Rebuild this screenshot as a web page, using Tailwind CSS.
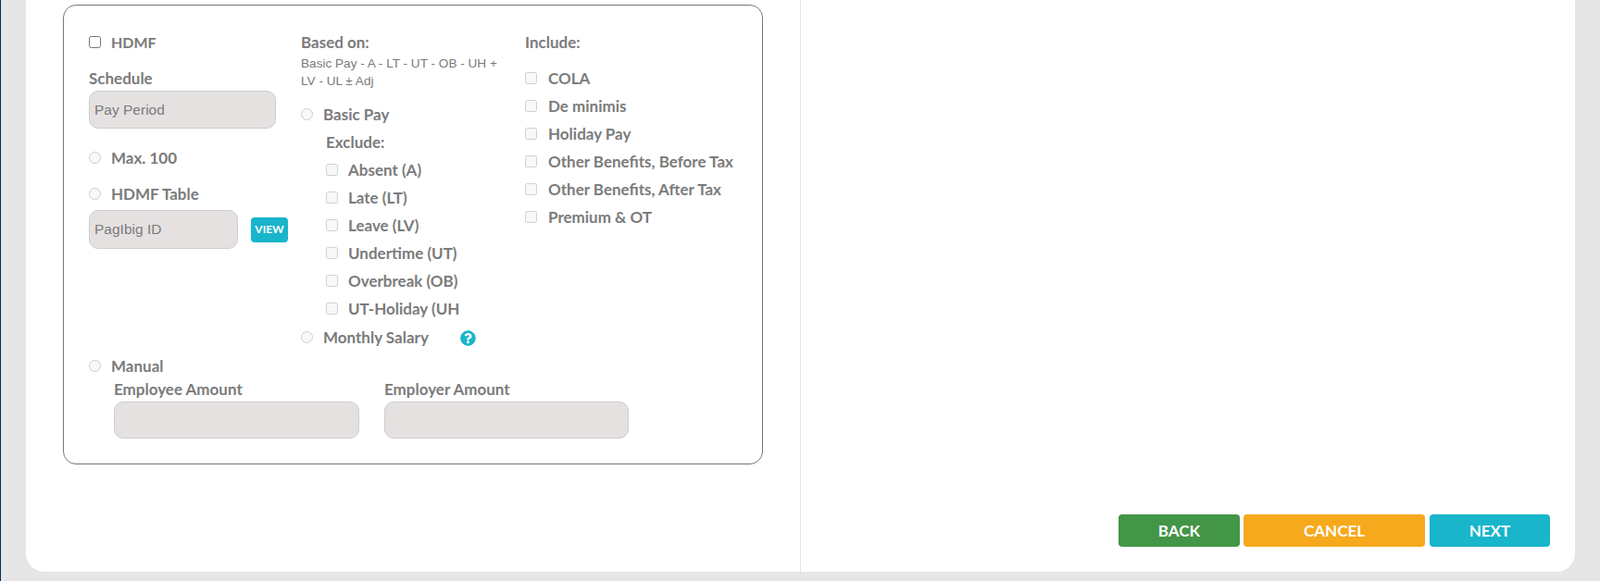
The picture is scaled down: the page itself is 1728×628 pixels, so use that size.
<!DOCTYPE html>
<html lang="en">
<head>
    <meta charset="UTF-8">
    <meta name="viewport" content="width=device-width, initial-scale=1.0">
    <title>HDMF Settings</title>
    <script src="https://cdn.jsdelivr.net/npm/@tailwindcss/browser@4"></script>
</head>
<body class="bg-[#e6e6e6] font-['Lato',sans-serif] text-[#7b7b7b]">
    <div class="h-[628px] overflow-hidden border-l border-[#012b57] pl-[27px] pr-[27px]">
        <div class="flex h-[618px] bg-white rounded-b-[20px]">

            <!-- Left pane -->
            <div class="w-[837px] border-r border-[#e5e5e5] pl-[40px] pt-[5px]">
                <div class="w-[756px] h-[497px] border border-[#77777a] rounded-[14px] pl-[27px] pt-[26px]">
                    <div class="flex text-[17px] font-bold">

                        <!-- HDMF column -->
                        <div class="w-[229px]">
                            <label class="flex items-center h-[27px]">
                                <input type="checkbox" class="w-[13px] h-[13px] m-0">
                                <span class="ml-[11px] text-[16px]">HDMF</span>
                            </label>
                            <p class="mt-[16px] leading-[20px]">Schedule</p>
                            <input disabled value="Pay Period" class="block w-[202px] h-[41px] mt-[3px] px-[5px] bg-[#e5e1e1] border border-[#cdcdcd] rounded-[10px] font-['Liberation_Sans',sans-serif] text-[15.500px] font-normal text-[#7b7b7b]">
                            <label class="flex items-center h-[30px] mt-[17px]">
                                <input type="radio" disabled class="w-[13px] h-[13px] mt-0 mx-0 mb-[2px]">
                                <span class="ml-[11px]">Max. 100</span>
                            </label>
                            <label class="flex items-center h-[30px] mt-[9px]">
                                <input type="radio" disabled class="w-[13px] h-[13px] mt-0 mx-0 mb-[2px]">
                                <span class="ml-[11px]">HDMF Table</span>
                            </label>
                            <div class="flex items-center mt-[2px]">
                                <input disabled value="PagIbig ID" class="block w-[161px] h-[42px] px-[5px] bg-[#e5e1e1] border border-[#cdcdcd] rounded-[10px] font-['Liberation_Sans',sans-serif] text-[15.500px] font-normal text-[#7b7b7b]">
                                <button class="w-[40px] h-[27px] ml-[14px] bg-[#18b5cb] rounded-[4px] text-white text-[12px] font-bold">VIEW</button>
                            </div>
                        </div>

                        <!-- Based on column -->
                        <div class="w-[242px]">
                            <p class="h-[28px] flex items-center">Based on:</p>
                            <p class="w-[220px] -mt-[1px] font-['Liberation_Sans',sans-serif] text-[13.600px] leading-[19px] font-normal">Basic Pay - A - LT - UT - OB - UH + LV - UL ± Adj</p>
                            <label class="flex items-center h-[30px] mt-[12px]">
                                <input type="radio" disabled class="w-[13px] h-[13px] mt-0 mx-0 mb-[2px]">
                                <span class="ml-[11px]">Basic Pay</span>
                            </label>
                            <div class="pl-[27px]">
                                <p class="h-[30px] flex items-center">Exclude:</p>
                                <label class="flex items-center h-[30px]"><input type="checkbox" disabled class="w-[13px] h-[13px] mt-0 mx-0 mb-[2px]"><span class="ml-[11px]">Absent (A)</span></label>
                                <label class="flex items-center h-[30px]"><input type="checkbox" disabled class="w-[13px] h-[13px] mt-0 mx-0 mb-[2px]"><span class="ml-[11px]">Late (LT)</span></label>
                                <label class="flex items-center h-[30px]"><input type="checkbox" disabled class="w-[13px] h-[13px] mt-0 mx-0 mb-[2px]"><span class="ml-[11px]">Leave (LV)</span></label>
                                <label class="flex items-center h-[30px]"><input type="checkbox" disabled class="w-[13px] h-[13px] mt-0 mx-0 mb-[2px]"><span class="ml-[11px]">Undertime (UT)</span></label>
                                <label class="flex items-center h-[30px]"><input type="checkbox" disabled class="w-[13px] h-[13px] mt-0 mx-0 mb-[2px]"><span class="ml-[11px]">Overbreak (OB)</span></label>
                                <label class="flex items-center h-[30px]"><input type="checkbox" disabled class="w-[13px] h-[13px] mt-0 mx-0 mb-[2px]"><span class="ml-[11px]">UT-Holiday (UH</span></label>
                            </div>
                            <div class="flex items-center h-[30px] mt-[1px]">
                                <input type="radio" disabled class="w-[13px] h-[13px] mt-0 mx-0 mb-[2px]">
                                <span class="ml-[11px] w-[148px]">Monthly Salary</span>
                                <svg class="w-[17px] h-[17px]" viewBox="0 0 512 512"><path fill="#18b5cb" d="M504 256c0 137-111 248-248 248S8 393 8 256 119 8 256 8s248 111 248 248zM262.700 90c-54.500 0-89.300 23-116.500 63.800-3.500 5.300-2.400 12.400 2.700 16.300l34.700 26.300c5.200 3.900 12.600 3 16.700-2.100 17.900-22.700 30.100-35.800 57.300-35.800 20.400 0 45.700 13.100 45.700 33 0 15-12.400 22.700-32.600 34-23.600 13.200-54.800 29.700-54.800 70.900V302c0 6.600 5.400 12 12 12h56c6.600 0 12-5.400 12-12v-1.300c0-28.600 83.500-29.800 83.500-107.100 0-58.200-60.400-102.600-116.700-102.600zM256 338.900c-25.500 0-46.200 20.700-46.200 46.200 0 25.500 20.700 46.200 46.200 46.200s46.200-20.700 46.200-46.200c0-25.500-20.700-46.200-46.200-46.200z"/></svg>
                            </div>
                        </div>

                        <!-- Include column -->
                        <div>
                            <p class="h-[28px] flex items-center">Include:</p>
                            <div class="mt-[10px]">
                                <label class="flex items-center h-[30px]"><input type="checkbox" disabled class="w-[13px] h-[13px] mt-0 mx-0 mb-[2px]"><span class="ml-[12px]">COLA</span></label>
                                <label class="flex items-center h-[30px]"><input type="checkbox" disabled class="w-[13px] h-[13px] mt-0 mx-0 mb-[2px]"><span class="ml-[12px]">De minimis</span></label>
                                <label class="flex items-center h-[30px]"><input type="checkbox" disabled class="w-[13px] h-[13px] mt-0 mx-0 mb-[2px]"><span class="ml-[12px]">Holiday Pay</span></label>
                                <label class="flex items-center h-[30px]"><input type="checkbox" disabled class="w-[13px] h-[13px] mt-0 mx-0 mb-[2px]"><span class="ml-[12px]">Other Benefits, Before Tax</span></label>
                                <label class="flex items-center h-[30px]"><input type="checkbox" disabled class="w-[13px] h-[13px] mt-0 mx-0 mb-[2px]"><span class="ml-[12px]">Other Benefits, After Tax</span></label>
                                <label class="flex items-center h-[30px]"><input type="checkbox" disabled class="w-[13px] h-[13px] mt-0 mx-0 mb-[2px]"><span class="ml-[12px]">Premium &amp; OT</span></label>
                            </div>
                        </div>
                    </div>

                    <!-- Manual -->
                    <div class="mt-[1px] text-[17px] font-bold">
                        <label class="flex items-center h-[30px]">
                            <input type="radio" disabled class="w-[13px] h-[13px] mt-0 mx-0 mb-[2px]">
                            <span class="ml-[11px]">Manual</span>
                        </label>
                        <div class="flex pl-[27px] gap-[27px]">
                            <div>
                                <p class="leading-[20px]">Employee Amount</p>
                                <input disabled class="block w-[265px] h-[40px] mt-[3px] bg-[#e5e1e1] border border-[#cdcdcd] rounded-[10px]">
                            </div>
                            <div>
                                <p class="leading-[20px]">Employer Amount</p>
                                <input disabled class="block w-[264px] h-[40px] mt-[3px] bg-[#e5e1e1] border border-[#cdcdcd] rounded-[10px]">
                            </div>
                        </div>
                    </div>
                </div>
            </div>

            <!-- Right pane -->
            <div class="flex-1 flex items-end justify-end pr-[27px] pb-[27px]">
                <div class="flex text-white text-[17px] font-bold">
                    <button class="w-[131px] h-[35px] bg-[#439547] rounded-[4px]">BACK</button>
                    <button class="w-[196px] h-[35px] ml-[4px] bg-[#f6a91d] rounded-[4px]">CANCEL</button>
                    <button class="w-[130px] h-[35px] ml-[5px] bg-[#18b5cb] rounded-[4px]">NEXT</button>
                </div>
            </div>
        </div>
    </div>
</body>
</html>
